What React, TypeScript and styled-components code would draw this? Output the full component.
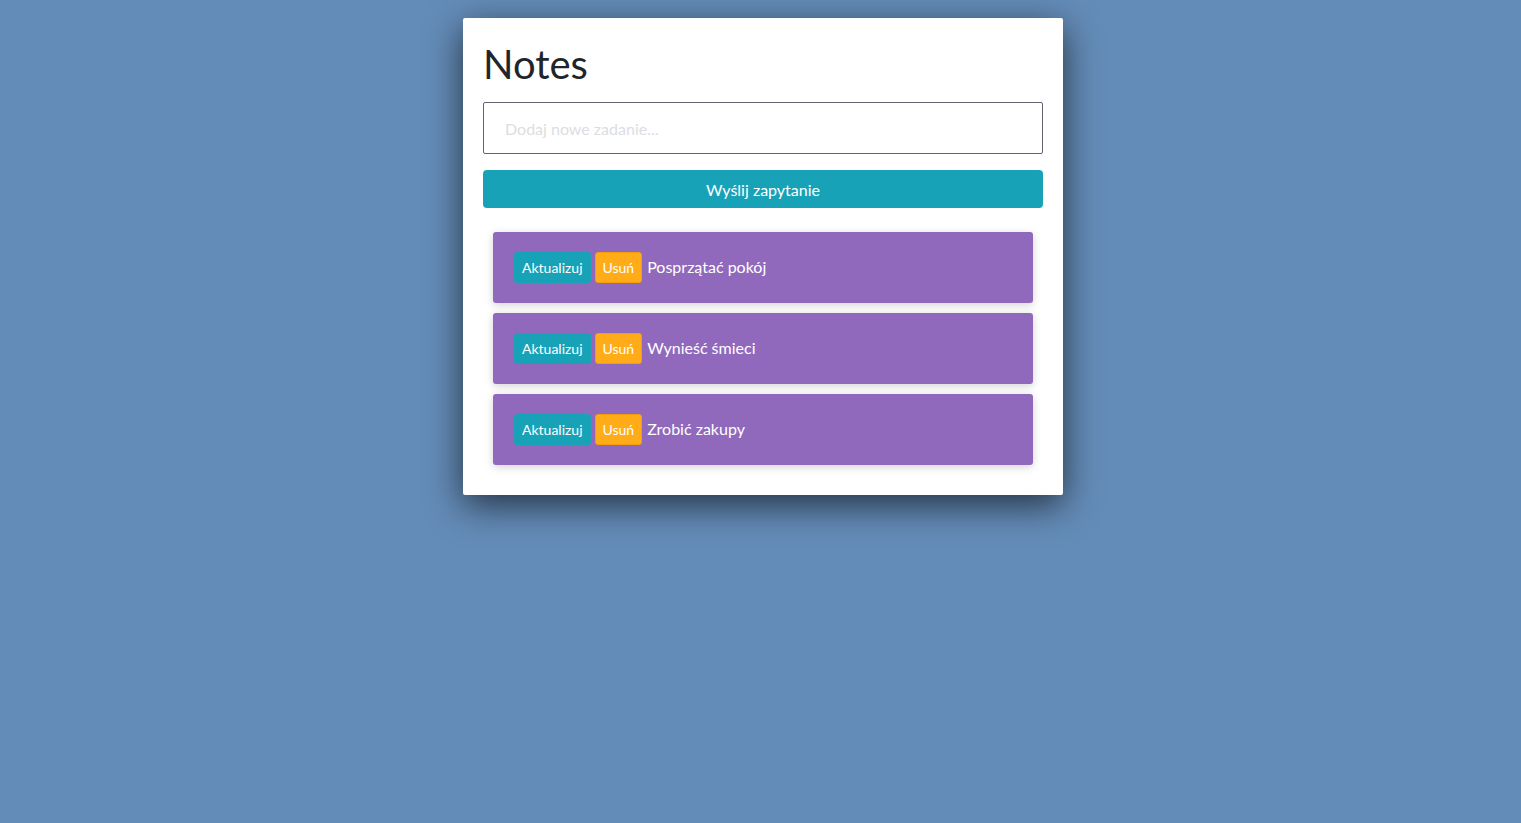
import React from "react";
import styled, { createGlobalStyle } from "styled-components";

const Global = createGlobalStyle`
  html, body { margin: 0; padding: 0; }
  body {
    background: #648cb8;
    font-family: "Segoe UI", Lato, "Noto Sans", sans-serif;
    color: #212529;
    min-height: 823px;
  }
  * { box-sizing: border-box; }
`;

const Page = styled.div`
  display: flex;
  justify-content: center;
  padding-top: 18px;
`;

const Card = styled.div`
  width: 600px;
  background: #fff;
  padding: 20px;
  box-shadow: 0 10px 36px rgba(0, 0, 0, 0.65);
  border-radius: 2px;
  margin-left: 5px;
`;

const Title = styled.h1`
  margin: 0 0 8px;
  font-size: 40px;
  font-weight: 400;
  line-height: 56px;
  position: relative;
  top: -2px;
  color: #212529;
`;

const Input = styled.input`
  display: block;
  width: 100%;
  height: 52px;
  border: 1px solid #646270;
  border-radius: 2px;
  padding: 0 21px;
  font-family: inherit;
  font-size: 16px;
  color: #495057;
  outline: none;
  &::placeholder { color: #dcdde2; }
`;

const Submit = styled.button`
  display: block;
  width: 100%;
  height: 38px;
  margin-top: 16px;
  border: none;
  border-radius: 4px;
  background: #17a2b8;
  color: #fff;
  font-family: inherit;
  font-size: 16px;
`;

const List = styled.ul`
  list-style: none;
  margin: 0;
  padding: 24px 10px 10px;
  display: flex;
  flex-direction: column;
  gap: 10px;
`;

const Item = styled.li`
  display: flex;
  align-items: center;
  padding: 20px 21px;
  height: 71px;
  background: #9069bc;
  border-radius: 3px;
  box-shadow: 0 2px 8px rgba(0, 0, 0, 0.18);
  color: #fff;
  font-size: 16px;
`;

const SmallBtn = styled.button<{ $variant: "info" | "warning" }>`
  height: 31px;
  padding: 0 7px;
  margin-right: 4px;
  border-radius: 3px;
  font-family: inherit;
  font-size: 14px;
  color: #fff;
  background: ${(p) => (p.$variant === "info" ? "#17a2b8" : "#ffac18")};
  border: 1px solid ${(p) => (p.$variant === "info" ? "#17a2b8" : "#f29d0c")};
`;

const Label = styled.span`
  margin-left: 1px;
  margin-top: -3px;
`;

const notes = ["Posprzątać pokój", "Wynieść śmieci", "Zrobić zakupy"];

export default function App() {
  return (
    <>
      <Global />
      <Page>
        <Card>
          <Title>Notes</Title>
          <Input placeholder="Dodaj nowe zadanie..." />
          <Submit>Wyślij zapytanie</Submit>
          <List>
            {notes.map((n) => (
              <Item key={n}>
                <SmallBtn $variant="info">Aktualizuj</SmallBtn>
                <SmallBtn $variant="warning">Usuń</SmallBtn>
                <Label>{n}</Label>
              </Item>
            ))}
          </List>
        </Card>
      </Page>
    </>
  );
}
